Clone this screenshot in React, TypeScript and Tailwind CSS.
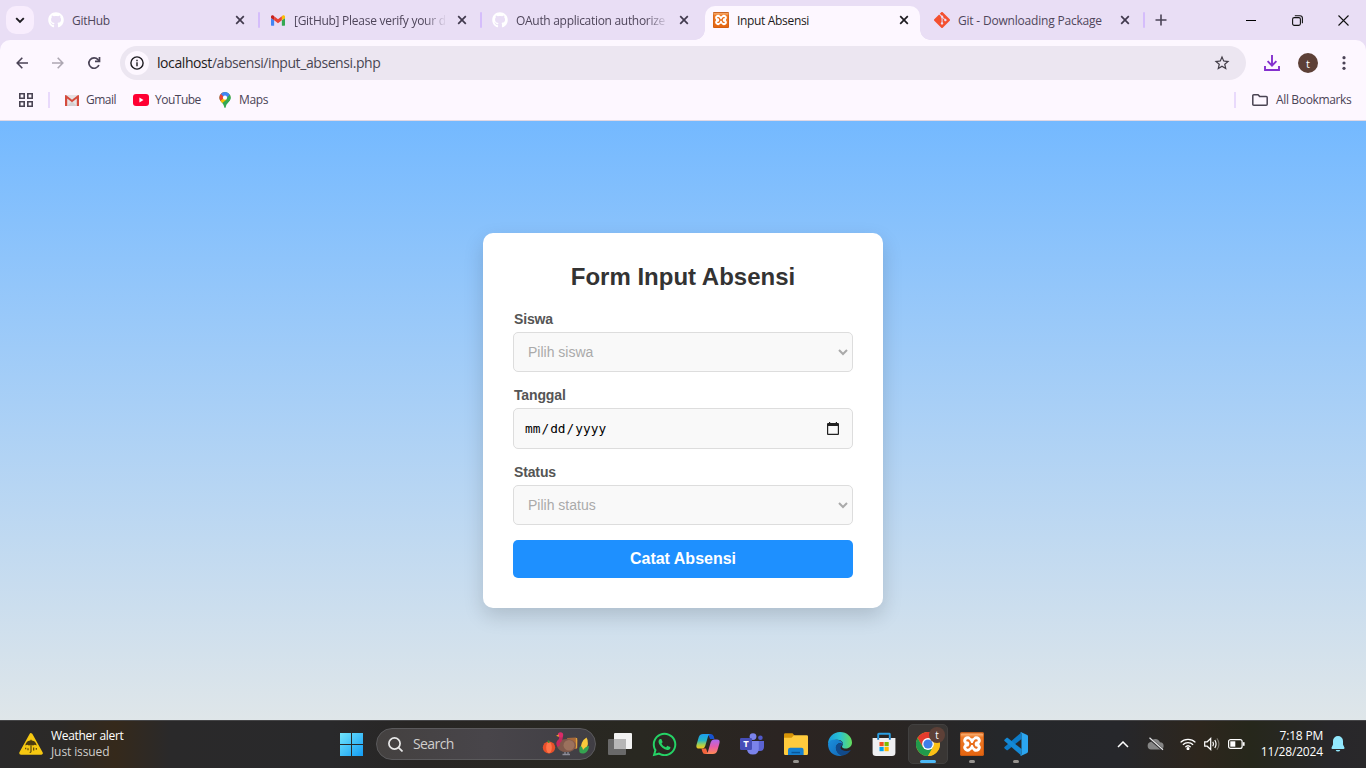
import type { ReactNode } from "react";
import { FaGithub, FaWhatsapp } from "react-icons/fa";
import { SiGit } from "react-icons/si";
import { MdStarBorder } from "react-icons/md";

function GmailIcon({ className }: { className?: string }) {
  return (
    <svg viewBox="0 0 16 12" className={className}>
      <path d="M1 12H3.6V5.6L0 3V11C0 11.6 .4 12 1 12Z" fill="#4285f4" />
      <path d="M12.4 12H15C15.6 12 16 11.6 16 11V3L12.4 5.6Z" fill="#34a853" />
      <path d="M12.4 1.2V5.8L16 3.1V1.7C16 .1 14.2-.5 13 .5Z" fill="#fbbc04" />
      <path d="M3.6 5.8V1.2L8 4.5 12.4 1.2V5.8L8 9.1Z" fill="#ea4335" />
      <path d="M0 1.7V3.1L3.6 5.8V1.2L3 .5C1.8-.5 0 .1 0 1.7Z" fill="#c5221f" />
    </svg>
  );
}

function OldGmailIcon() {
  return (
    <svg viewBox="0 0 14 11" className="h-[11px] w-[14px]">
      <rect width="14" height="11" rx="1" fill="#e6e2e4" />
      <path d="M2 11 7 6.5 12 11Z" fill="#d3d0d2" />
      <path d="M0 11V.8C0 0 .8 0 1.2.2L7 4.8 12.8.2C13.2 0 14 0 14 .8V11H11.8V3.4L7 7.2 2.2 3.4V11Z" fill="#d54b3d" />
    </svg>
  );
}

function MapsIcon() {
  return (
    <svg viewBox="0 0 12 16" className="h-4 w-3">
      <defs>
        <clipPath id="pin">
          <path d="M6 0A5.6 5.6 0 0 0 .4 5.7C.4 9.4 4.6 10.5 5.3 15.2 5.5 16.2 6.5 16.2 6.7 15.2 7.4 10.5 11.6 9.4 11.6 5.7A5.6 5.6 0 0 0 6 0Z" />
        </clipPath>
      </defs>
      <g clipPath="url(#pin)">
        <rect width="12" height="16" fill="#34a853" />
        <path d="M0 10 6 4 10 2 12 4 2 12Z" fill="#fbbc04" />
        <path d="M0 0H4L6 5 0 10Z" fill="#ea4335" />
        <path d="M0 0H12V2.6L7 7.5 5 5 2 2Z" fill="#4285f4" />
        <path d="M8.5 5 12 1.5V8L8 12 6 12Z" fill="#34a853" />
        <circle cx="6" cy="5.7" r="2.1" fill="#fff" />
      </g>
    </svg>
  );
}

function XamppIcon({ className }: { className?: string }) {
  return (
    <svg viewBox="0 0 24 24" className={className}>
      <defs>
        <linearGradient id="xa" x1="0" y1="0" x2="0" y2="1">
          <stop offset="0" stopColor="#c65a17" />
          <stop offset=".1" stopColor="#f9a766" />
          <stop offset=".22" stopColor="#ee7a27" />
          <stop offset="1" stopColor="#e4640f" />
        </linearGradient>
      </defs>
      <rect width="24" height="24" rx="1.8" fill="url(#xa)" />
      <rect x=".5" y=".5" width="23" height="23" rx="1.5" fill="none" stroke="#bc5412" strokeOpacity=".7" />
      <path
        d="M8 4.200C10 4.200 10.500 6.600 12 6.600S14 4.200 16 4.200C18.900 4.200 20.800 6.200 20.800 8.700 20.800 10.400 19.400 11 19.400 12S20.800 13.600 20.800 15.300C20.800 17.800 18.900 19.800 16 19.800S13.500 17.400 12 17.400 10 19.800 8 19.800 3.200 17.800 3.200 15.300C3.200 13.600 4.600 13 4.600 12S3.200 10.400 3.200 8.700C3.200 6.200 5.100 4.200 8 4.200Z"
        fill="#fff"
      />
      <path
        d="M7.300 8.500Q8.400 8 9.300 9.300T10.400 12Q10.200 13.400 9.300 14.700T7.300 15.500M16.700 8.500Q15.600 8 14.700 9.300T13.600 12Q13.800 13.400 14.700 14.700T16.700 15.500M10.400 12H13.600"
        fill="none"
        stroke="#e86d1b"
        strokeWidth="2"
        strokeLinecap="round"
      />
    </svg>
  );
}

function Cross({ className }: { className: string }) {
  return (
    <svg viewBox="0 0 10 10" className={className} stroke="currentColor" strokeWidth="1.7">
      <path d="M1.2 1.2 8.800 8.800M8.800 1.200 1.200 8.800" />
    </svg>
  );
}

function Tab({ icon, title, textClass, last }: { icon: ReactNode; title: string; textClass?: string; last?: boolean }) {
  return (
    <div className={last ? "flex h-10 w-[221px] shrink-0 items-center pl-[10px]" : "flex h-10 w-[222px] shrink-0 items-center pl-[10px]"}>
      <span className="flex size-4 shrink-0 items-center justify-center">{icon}</span>
      <span className={`ml-2 w-[151px] shrink-0 whitespace-nowrap pt-[2px] text-[12px] leading-5 text-[#4f465b] ${textClass ?? ""}`}>{title}</span>
      <Cross className={last ? "ml-[11px] size-[10px] shrink-0 text-[#41394d]" : "ml-[12px] size-[10px] shrink-0 text-[#41394d]"} />
    </div>
  );
}

function Separator() {
  return <span className="-ml-[2px] h-4 w-[2px] shrink-0 rounded-full bg-[#d5bdfb]" />;
}

const fade = "[mask-image:linear-gradient(to_right,black_130px,transparent_153px)]";

function TabStrip() {
  return (
    <div className="flex h-10 items-center bg-[#e9def5]">
      <div className="ml-[6px] mr-1 flex h-7 w-7 shrink-0 items-center justify-center rounded-[10px] bg-[#f8edfd]">
        <svg viewBox="0 0 10 7" className="h-[7px] w-[10px]" fill="none" stroke="#1d1b20" strokeWidth="1.9">
          <path d="M1.2 1.2 5 5 8.8 1.2" />
        </svg>
      </div>
      <Tab icon={<FaGithub className="size-4 text-white" />} title="GitHub" textClass="tracking-[-0.3px]" />
      <Separator />
      <Tab icon={<GmailIcon className="h-[11px] w-[14px]" />} title="[GitHub] Please verify your d" textClass={`tracking-[-0.27px] ${fade}`} />
      <Separator />
      <Tab icon={<FaGithub className="size-4 text-white" />} title="OAuth application authorize" textClass={`tracking-[-0.3px] ${fade}`} />
      <div className="relative ml-[1px] mr-1 mt-[6px] flex h-[34px] w-[215px] shrink-0 items-center rounded-t-[10px] bg-[#fdf7ff] pb-[6px] pl-2">
        <span className="absolute -left-[10px] bottom-0 size-[10px] bg-[radial-gradient(circle_at_0_0,transparent_9.5px,#fdf7ff_10px)]" />
        <span className="absolute -right-[10px] bottom-0 size-[10px] bg-[radial-gradient(circle_at_100%_0,transparent_9.5px,#fdf7ff_10px)]" />
        <XamppIcon className="size-4" />
        <span className="ml-2 w-[151px] pt-[2px] text-[12px] leading-5 tracking-[-0.33px] text-[#1d1b20]">Input Absensi</span>
        <Cross className="ml-[11px] size-[10px] text-[#1d1b20]" />
      </div>
      <Tab icon={<SiGit className="size-4 text-[#f4502f]" />} title="Git - Downloading Package" textClass="tracking-[-0.2px]" last />
      <Separator />
      <svg viewBox="0 0 12 12" className="ml-[10px] size-3" stroke="#4a4356" strokeWidth="1.6">
        <path d="M6 .5V11.5M.5 6H11.5" />
      </svg>
      <div className="ml-auto flex h-10 items-center">
        <span className="flex w-[46px] justify-center"><span className="h-px w-[10px] bg-black" /></span>
        <span className="flex w-[46px] justify-center">
          <svg viewBox="0 0 11 11" className="size-[11px]" fill="none" stroke="#111" strokeWidth="1.1">
            <rect x=".6" y="2.6" width="7.8" height="7.8" rx="1.6" />
            <path d="M2.8.7H8A2.4 2.4 0 0 1 10.4 3.1V8.2" />
          </svg>
        </span>
        <span className="flex w-[46px] justify-center">
          <svg viewBox="0 0 11 11" className="size-[11px]" stroke="#111" strokeWidth="1.1"><path d="M.5.5 10.5 10.5M10.5.5.5 10.5" /></svg>
        </span>
      </div>
    </div>
  );
}

function Toolbar() {
  return (
    <div className="flex h-[46px] items-center">
      <svg viewBox="0 0 12 12" className="ml-4 size-3" fill="none" stroke="#4a4356" strokeWidth="1.6"><path d="M12 6H1.2M6.3.8 1.2 6 6.3 11.2" /></svg>
      <svg viewBox="0 0 12 12" className="ml-6 size-3" fill="none" stroke="#ada7b2" strokeWidth="1.6"><path d="M0 6H10.8M5.7.8 10.8 6 5.7 11.2" /></svg>
      <svg viewBox="0 0 14 14" className="ml-[23px] size-[14px]" fill="none" stroke="#4a4356" strokeWidth="1.7">
        <path d="M11.9 9A5.2 5.2 0 1 1 11 3.6L12.4 5" />
        <path d="M12.5 1V5.4H8" />
      </svg>
      <div className="ml-[19px] flex h-[34px] w-[1126px] items-center rounded-full bg-[#ece6f1] pl-[5px]">
        <span className="flex size-6 items-center justify-center rounded-full bg-[#fdf7ff]">
          <svg viewBox="0 0 14 14" className="size-[14px]" fill="none" stroke="#1d1b20" strokeWidth="1.4">
            <circle cx="7" cy="7" r="6.1" /><path d="M7 6.2V10.2M7 3.8V5.2" />
          </svg>
        </span>
        <span className="ml-2 whitespace-nowrap text-[14px] leading-5 tracking-[-0.42px] text-[#4a4653]">
          <span className="text-[#1d1b20]">localhost</span>/absensi/input_absensi.php
        </span>
        <MdStarBorder className="ml-auto mr-[15px] size-[18px] text-[#413c46]" />
      </div>
      <svg viewBox="0 0 16 16" className="ml-[18px] size-4" fill="none" stroke="#8430ce" strokeWidth="1.9">
        <path d="M8 0V10.5M3.6 6.2 8 10.6 12.4 6.2M1 11V15H15V11" />
      </svg>
      <span className="ml-[18px] flex size-5 items-center justify-center rounded-full bg-[#5d4037] text-[11px] leading-none text-white">t</span>
      <svg viewBox="0 0 4 14" className="ml-6 h-[14px] w-1" fill="#4a4356">
        <circle cx="2" cy="1.7" r="1.6" /><circle cx="2" cy="7" r="1.6" /><circle cx="2" cy="12.3" r="1.6" />
      </svg>
    </div>
  );
}

function Bookmarks() {
  return (
    <div className="flex h-[34px] items-center pb-[6px] text-[12px] leading-5 text-[#4a4356]">
      <svg viewBox="0 0 14 14" className="ml-[19px] size-[14px] shrink-0" fill="none" stroke="#4a4453" strokeWidth="1.6">
        <path d="M.8.8H5.2V5.2H.8ZM8.8.8H13.2V5.2H8.8ZM.8 8.8H5.2V13.2H.8ZM8.8 8.8H13.2V13.2H8.8Z" />
      </svg>
      <span className="ml-[15px] mr-[15px] h-4 w-[2px] bg-[#e9dafc]" />
      <OldGmailIcon />
      <span className="ml-[7px] w-[47px] tracking-[-0.5px]">Gmail</span>
      <svg viewBox="0 0 16 12" className="h-3 w-4"><rect width="16" height="12" rx="3" fill="#ff0033" /><path d="M6.4 3.6 10.5 6 6.4 8.4Z" fill="#fff" /></svg>
      <span className="ml-[6px] w-[64px] tracking-[-0.5px]">YouTube</span>
      <MapsIcon />
      <span className="ml-2 tracking-[-0.35px]">Maps</span>
      <span className="ml-auto mr-4 h-4 w-[2px] bg-[#e9dafc]" />
      <svg viewBox="0 0 16 12" className="h-3 w-4" fill="none" stroke="#4a4453" strokeWidth="1.5">
        <path d="M1.8.8H6L7.6 2.4H14.2Q15.2 2.4 15.2 3.4V10.2Q15.2 11.2 14.2 11.2H1.8Q.8 11.2.8 10.2V1.8Q.8.8 1.8.8Z" />
      </svg>
      <span className="ml-2 mr-[14px] w-[76px] whitespace-nowrap tracking-[-0.35px]">All Bookmarks</span>
    </div>
  );
}

function FieldLabel({ text }: { text: string }) {
  return <div className="mb-[5px] pl-px text-[14px] font-bold leading-4 tracking-[-0.14px] text-[#555]">{text}</div>;
}

function SelectField({ label, value }: { label: string; value: string }) {
  return (
    <div>
      <FieldLabel text={label} />
      <div className="flex h-10 items-center rounded-[5px] border border-[#ddd] bg-[#f9f9f9] pl-[14px] pr-1 text-[14px] text-[#aaa]">
        <span>{value}</span>
        <svg viewBox="0 0 10 7" className="ml-auto h-[7px] w-[10px]" fill="none" stroke="#aaa" strokeWidth="2"><path d="M1 1 5 5 9 1" /></svg>
      </div>
    </div>
  );
}

function FormCard() {
  return (
    <div className="flex h-[375px] w-[400px] flex-col rounded-[10px] bg-white px-[30px] pt-[30px] font-['Liberation_Sans',sans-serif] shadow-[0_8px_20px_rgba(0,0,0,0.15)]">
      <h2 className="mb-5 text-center text-[24px] font-bold leading-7 text-[#333]">Form Input Absensi</h2>
      <SelectField label="Siswa" value="Pilih siswa" />
      <div className="mb-[15px] mt-[15px]">
        <FieldLabel text="Tanggal" />
        <div className="flex h-[41px] items-center rounded-[5px] border border-[#ddd] bg-[#f9f9f9] pl-[11px] pr-[13px] font-['DejaVu_Sans_Mono',monospace] text-[12.8px] text-black">
          <span>mm</span><span className="px-px">/</span><span>dd</span><span className="px-px">/</span><span>yyyy</span>
          <svg viewBox="0 0 12 13" className="ml-auto h-[13px] w-3" fill="#222">
            <path d="M2 0H3.200V1H8.800V0H10V1H11Q12 1 12 2V12Q12 13 11 13H1Q0 13 0 12V2Q0 1 1 1H2ZM1.200 4V11.800H10.800V4Z" />
          </svg>
        </div>
      </div>
      <SelectField label="Status" value="Pilih status" />
      <button className="mt-[15px] h-[38px] rounded-[5px] bg-[#1e90ff] text-[16px] font-bold text-white">Catat Absensi</button>
    </div>
  );
}

function WeatherIcon() {
  return (
    <svg viewBox="0 0 24 22" className="h-[22px] w-6">
      <path d="M12 2 22 20H2Z" fill="#f6c811" stroke="#f6c811" strokeWidth="3.6" strokeLinejoin="round" />
      <path d="M6.300 12.600C6.900 8.900 9.500 7.600 12 7.600S17.100 8.900 17.700 12.600L15.800 11.700 14 12.600 12 11.700 10 12.600 8.200 11.700Z" fill="#4a3a10" />
      <path d="M12 6.800V18.200Q12 19.600 10.700 19.400M6.700 14.800V16.200M9 15.300V17.200M14.700 14.500V17.600M17.300 15V16.800" stroke="#4a3a10" strokeWidth="1.1" fill="none" />
    </svg>
  );
}

function HolidayArt() {
  return (
    <svg viewBox="0 0 48 24" className="h-6 w-12">
      <ellipse cx="7" cy="15.500" rx="6.200" ry="6" fill="#e8502a" />
      <ellipse cx="7" cy="15.500" rx="2.800" ry="5.800" fill="#ff7448" />
      <path d="M7 10.800 6.200 8.500" stroke="#3b8a34" strokeWidth="1.800" />
      <path d="M25 6 34 5.500 35.500 8 35 17 27 17Z" fill="#a5683b" />
      <path d="M34.500 6V16" stroke="#e0a23b" strokeWidth="1.300" />
      <ellipse cx="24.500" cy="13.500" rx="9.500" ry="6.600" fill="#80594c" />
      <ellipse cx="27" cy="13.300" rx="5.500" ry="5.200" fill="#9b715d" />
      <path d="M17 14Q14.500 11 18 8.500 20 5 18.500 3" stroke="#c4285f" strokeWidth="3.400" fill="none" />
      <circle cx="18.500" cy="2.900" r="2.700" fill="#d92b68" />
      <path d="M17 2.500 14 3.700 16.500 4.700Z" fill="#f4a62a" />
      <path d="M23 20V22.500M26 20V22.500M20.500 22.500H28" stroke="#8d8c99" strokeWidth="1.300" />
      <path d="M38.500 19Q38.500 9 44.500 5.500 48 11 43 19Z" fill="#fbc93b" />
      <path d="M37.500 20Q36.500 15 39 14 41 16 41 18 44 14 47 14 46.500 20 42 21.500 38 21.500 37.500 20Z" fill="#35a350" />
    </svg>
  );
}

function CopilotIcon() {
  return (
    <svg viewBox="0 0 24 22" className="h-[22px] w-6">
      <defs>
        <linearGradient id="cp1" x1="0" y1="0" x2="0" y2="1">
          <stop offset="0" stopColor="#1b9df0" /><stop offset=".45" stopColor="#27b6c4" /><stop offset=".75" stopColor="#a9cf4b" /><stop offset="1" stopColor="#f5c51c" />
        </linearGradient>
        <linearGradient id="cp2" x1="0" y1="0" x2="0" y2="1">
          <stop offset="0" stopColor="#a969f2" /><stop offset=".5" stopColor="#e85caa" /><stop offset="1" stopColor="#ff8a52" />
        </linearGradient>
      </defs>
      <path d="M12 1H15Q17 1 17.8 3.500L18.500 6H14Z" fill="#1652cf" />
      <path d="M12 21H9Q7 21 6.300 18.500L5.500 15.500H10Z" fill="#f2643c" />
      <path d="M7 1H14.500Q12.600 1.400 12 3.500L9.200 13Q8.500 15.500 6 15.500H3Q-.5 15.500.6 11.500L2.800 4Q3.800 1 7 1Z" fill="url(#cp1)" />
      <path d="M17 21H9.500Q11.400 20.600 12 18.500L14.800 9Q15.500 6.500 18 6.500H21Q24.500 6.500 23.400 10.500L21.200 18Q20.200 21 17 21Z" fill="url(#cp2)" />
    </svg>
  );
}

function TeamsIcon() {
  return (
    <svg viewBox="0 0 24 22" className="h-[22px] w-6">
      <circle cx="13" cy="3.600" r="3.400" fill="#7b83eb" />
      <circle cx="20.400" cy="4.700" r="2.300" fill="#5059c9" />
      <path d="M16 8H24V14Q24 18 20 18H16Z" fill="#5b63d2" />
      <path d="M7 8H18.800V15.500Q18.800 21.500 12.900 21.500T7 15.500Z" fill="#7b83eb" />
      <rect y="5" width="12" height="12" rx="1.200" fill="#464eb8" />
      <text x="6" y="14.300" textAnchor="middle" fontSize="9.500" fontWeight="700" fontFamily="Open Sans, sans-serif" fill="#fff">T</text>
    </svg>
  );
}

function ExplorerIcon() {
  return (
    <svg viewBox="0 0 24 22" className="h-[22px] w-6">
      <path d="M0 1.500Q0 .3 1.200.3H8.500L10.500 2.500 8 6H0Z" fill="#d79407" />
      <path d="M10 2.300H22.700Q24 2.300 24 3.600V20.500Q24 22 22.700 22H1.300Q0 22 0 20.500V4.800H7.500Z" fill="#ffcb3d" />
      <path d="M4 22V17Q4 14.800 6.200 14.800H17.500Q19.600 14.800 19.600 17V22Z" fill="#1680cf" />
      <path d="M7.500 18.800H16V20.300H7.500Z" fill="#0a5597" />
    </svg>
  );
}

function EdgeIcon() {
  return (
    <svg viewBox="0 0 24 24" className="size-6">
      <defs>
        <linearGradient id="ed1" x1="0" y1="0" x2="1" y2="0"><stop offset="0" stopColor="#199cdd" /><stop offset=".5" stopColor="#2bc3d2" /><stop offset="1" stopColor="#65dd59" /></linearGradient>
        <linearGradient id="ed2" x1="0" y1="0" x2="1" y2="1"><stop offset="0" stopColor="#1b8fdc" /><stop offset="1" stopColor="#1269b8" /></linearGradient>
      </defs>
      <path d="M0 12C0 5 5.500 0 12 0 19 0 24 5 24 10.500 24 14 21.300 16.500 17.800 16.500 14.500 16.500 13.500 15 14.300 13.800 16 11 14 7.800 9.500 7.800 5 7.800 1 10 0 12Z" fill="url(#ed1)" />
      <path d="M0 12C1 8.500 5 7 9 7.800 12.500 8 14.800 10 14.800 12.500 12 9.500 8 12 8 15.500 8 19 11 23 15 23.600 7 25.500 0 20.500 0 12Z" fill="url(#ed2)" />
      <path d="M14.800 12.500C12 9.500 7.500 12 7.800 16 8 20 11.500 23.500 15 23.600 18.500 23 21.500 20.500 22.800 18 20 19.300 16.500 19.300 14.300 18 11.500 16.500 12.500 14.500 14.800 12.500Z" fill="#114a8b" />
    </svg>
  );
}

function StoreIcon() {
  return (
    <svg viewBox="0 0 24 24" className="size-6">
      <path d="M6.200 7V2.300Q6.200 1.800 6.800 1.800H17.200Q17.800 1.800 17.800 2.300V7" fill="none" stroke="#2b9fe3" strokeWidth="1.900" />
      <path d="M.6 6H23.400V20.700Q23.400 24 20 24H4Q.6 24 .6 20.700Z" fill="#efeff1" />
      <rect x="7.500" y="10" width="4.200" height="4.200" fill="#f25022" /><rect x="12.500" y="10" width="4.200" height="4.200" fill="#7fba00" />
      <rect x="7.500" y="15" width="4.200" height="4.200" fill="#00a4ef" /><rect x="12.500" y="15" width="4.200" height="4.200" fill="#ffb900" />
      <path d="M6.200 6V7.800M17.800 6V7.800" stroke="#1977bd" strokeWidth="1.900" />
    </svg>
  );
}

function ChromeIcon() {
  return (
    <svg viewBox="0 0 24 24" className="size-6">
      <circle cx="12" cy="12" r="12" fill="#fbc116" />
      <path d="M12 12 22.400 6A12 12 0 0 0 1.600 6L6.800 15Z" fill="#e33b2e" />
      <path d="M1.600 6A12 12 0 0 0 12 24L17.200 15 6.800 15Z" fill="#219a4c" />
      <path d="M12 6.500H22.600A12 12 0 0 1 12 24L17 15Z" fill="#fbc116" />
      <circle cx="12" cy="12" r="5.900" fill="#fff" /><circle cx="12" cy="12" r="4.600" fill="#3f7ee8" />
    </svg>
  );
}

function CodeIcon() {
  return (
    <svg viewBox="0 0 24 24" className="size-6">
      <path d="M17.500 7 3.600 18.200 2.700 18.200.5 16.200Q0 15.600.5 15.100L17.300.5Z" fill="#0c7bc8" />
      <path d="M17.500 17 3.600 5.800 2.700 5.800.5 7.800Q0 8.400.5 8.900L17.300 23.500Z" fill="#1489d6" />
      <path d="M17.300.3 23.200 3Q24 3.400 24 4.400V19.600Q24 20.600 23.200 21L17.300 23.700Q16.400 24 15.900 23.400 17.500 23.600 17.500 21.800V2.200Q17.500.4 15.900.6 16.400 0 17.300.3Z" fill="#2ba5ef" />
    </svg>
  );
}

function TaskItem({ children, running }: { children: ReactNode; running?: boolean }) {
  return (
    <div className="relative flex h-12 w-11 shrink-0 items-center justify-center">
      {children}
      {running && <span className="absolute bottom-[5px] h-[3px] w-[6px] rounded-full bg-[#96938f]" />}
    </div>
  );
}

function Taskbar() {
  return (
    <div className="flex h-12 items-center bg-[linear-gradient(to_right,#2a292a_0,#2b2927_60px,#35291b_115px,#2a292a_170px,#29292b_330px,#282624_420px,#292821_640px,#2b2422_780px,#2a2522_880px,#25272a_1000px,#26272b_1120px,#2d261d_1200px,#26271b_1250px,#28272a_1330px,#29282a_1366px)] text-white shadow-[inset_0_1px_0_#454547]">
      <div className="ml-[19px] flex w-[308px] items-center">
        <WeatherIcon />
        <div className="ml-2 text-[12px] leading-4">
          <div className="tracking-[-0.3px]">Weather alert</div>
          <div className="tracking-[-0.1px] text-[#cfcdcb]">Just issued</div>
        </div>
      </div>
      <div className="mr-px flex w-[48px] justify-center">
        <svg viewBox="0 0 23 23" className="size-[23px]">
          <defs><linearGradient id="win" x1="0" y1="0" x2="1" y2="1"><stop offset="0" stopColor="#72e5fc" /><stop offset="1" stopColor="#129cf4" /></linearGradient></defs>
          <path d="M0 0H11V11H0ZM12 0H23V11H12ZM0 12H11V23H0ZM12 12H23V23H12Z" fill="url(#win)" />
        </svg>
      </div>
      <div className="flex h-8 w-[220px] shrink-0 items-center rounded-full border border-[#5b5a5c] bg-[linear-gradient(to_right,#444140,#48454a_50%,#403e44)] pl-[11px]">
        <svg viewBox="0 0 15 15" className="size-[15px]" fill="none" stroke="#e8e8e8" strokeWidth="1.700"><circle cx="6.500" cy="6.500" r="5.600" /><path d="M10.600 10.600 14.500 14.500" /></svg>
        <span className="ml-[10px] w-[129px] text-[14px] leading-5 tracking-[-0.6px] text-[#d0cecd]">Search</span>
        <HolidayArt />
      </div>
      <div className="ml-[2px] flex">
        <TaskItem>
          <svg viewBox="0 0 24 22" className="h-[22px] w-6">
            <rect x="6" width="18" height="16" rx="1" fill="#f2f2f2" /><rect y="6" width="18" height="16" rx="1" fill="#696969" /><path d="M6 6H18V16H6Z" fill="#b6b6b6" />
          </svg>
        </TaskItem>
        <TaskItem><FaWhatsapp className="size-[27px] text-[#25d366]" /></TaskItem>
        <TaskItem><CopilotIcon /></TaskItem>
        <TaskItem><TeamsIcon /></TaskItem>
        <TaskItem running><ExplorerIcon /></TaskItem>
        <TaskItem><EdgeIcon /></TaskItem>
        <TaskItem><StoreIcon /></TaskItem>
        <TaskItem>
          <div className="relative flex h-10 w-10 items-center justify-center rounded-[5px] border border-[#41403f] bg-[#393634]">
            <ChromeIcon />
            <span className="absolute right-[2px] top-[2px] flex size-4 items-center justify-center rounded-full bg-[#5d4037] text-[10px] leading-none">t</span>
            <span className="absolute bottom-0 h-[3px] w-4 rounded-full bg-[#4cb8f5]" />
          </div>
        </TaskItem>
        <TaskItem running><XamppIcon className="size-6" /></TaskItem>
        <TaskItem running><CodeIcon /></TaskItem>
      </div>
      <div className="ml-auto mr-[21px] flex items-center">
        <svg viewBox="0 0 12 7" className="mr-[18px] h-[7px] w-3" fill="none" stroke="#fff" strokeWidth="1.500"><path d="M1 6 6 1 11 6" /></svg>
        <svg viewBox="0 0 17 14" className="mr-4 h-[14px] w-[17px]">
          <path d="M4 12.500A3.800 3.800 0 0 1 3.700 5 5 5 0 0 1 13 5.300 3.600 3.600 0 0 1 13 12.500Z" fill="#858585" />
          <path d="M2 1 16 13" stroke="#29282a" strokeWidth="2.400" /><path d="M2.500.8 16 12.800" stroke="#e9e9e9" strokeWidth="1.200" />
        </svg>
        <svg viewBox="0 0 16 12" className="mr-2 h-3 w-4" fill="none" stroke="#fff" strokeWidth="1.300">
          <path d="M.6 4.400A10.400 10.400 0 0 1 15.400 4.400M2.900 6.800A7.200 7.200 0 0 1 13.100 6.800M5.300 9.100A3.900 3.900 0 0 1 10.700 9.100" /><circle cx="8" cy="10.600" r=".9" fill="#fff" />
        </svg>
        <svg viewBox="0 0 16 14" className="mr-2 h-[14px] w-4" fill="none" stroke="#fff" strokeWidth="1.200">
          <path d="M.7 4.800H3.200L6.700 1.500V12.500L3.200 9.200H.7ZM8.800 4.800Q10.200 7 8.800 9.200M10.800 3Q13.300 7 10.800 11" /><path d="M12.900 1.400Q17 7 12.900 12.600" stroke="#77736b" />
        </svg>
        <svg viewBox="0 0 17 10" className="h-[10px] w-[17px]" fill="none" stroke="#fff" strokeWidth="1.200">
          <rect x=".6" y=".6" width="13.500" height="8.800" rx="2" /><rect x="2.300" y="2.300" width="5" height="5.400" fill="#fff" stroke="none" /><path d="M15.700 3.200V6.800" strokeWidth="1.800" />
        </svg>
        <div className="ml-2 w-[70px] whitespace-nowrap text-right text-[12px] leading-4"><div className="tracking-[-0.2px]">7:18 PM</div><div className="tracking-[-0.15px]">11/28/2024</div></div>
        <svg viewBox="0 0 14 16" className="ml-2 h-4 w-[14px]" fill="#92e8fd">
          <path d="M7 0A5 5 0 0 0 2 5V8.500L.5 11.800Q.2 12.900 1.300 12.900H12.700Q13.800 12.900 13.500 11.800L12 8.500V5A5 5 0 0 0 7 0ZM4.700 13.900A2.400 2.400 0 0 0 9.300 13.900Z" />
        </svg>
      </div>
    </div>
  );
}

export default function App() {
  return (
    <div className="flex h-[768px] w-[1366px] flex-col overflow-hidden font-['Open_Sans','Noto_Sans',sans-serif]">
      <div className="h-[121px] shrink-0 border-b border-[#e0d8e4] bg-[#e9def5]">
        <TabStrip />
        <div className="rounded-t-[10px] bg-[#fdf7ff]">
          <Toolbar />
          <Bookmarks />
        </div>
      </div>
      <main className="flex h-[599px] shrink-0 items-center justify-center bg-linear-to-b from-[#74b9ff] to-[#dfe6e9]">
        <FormCard />
      </main>
      <Taskbar />
    </div>
  );
}
